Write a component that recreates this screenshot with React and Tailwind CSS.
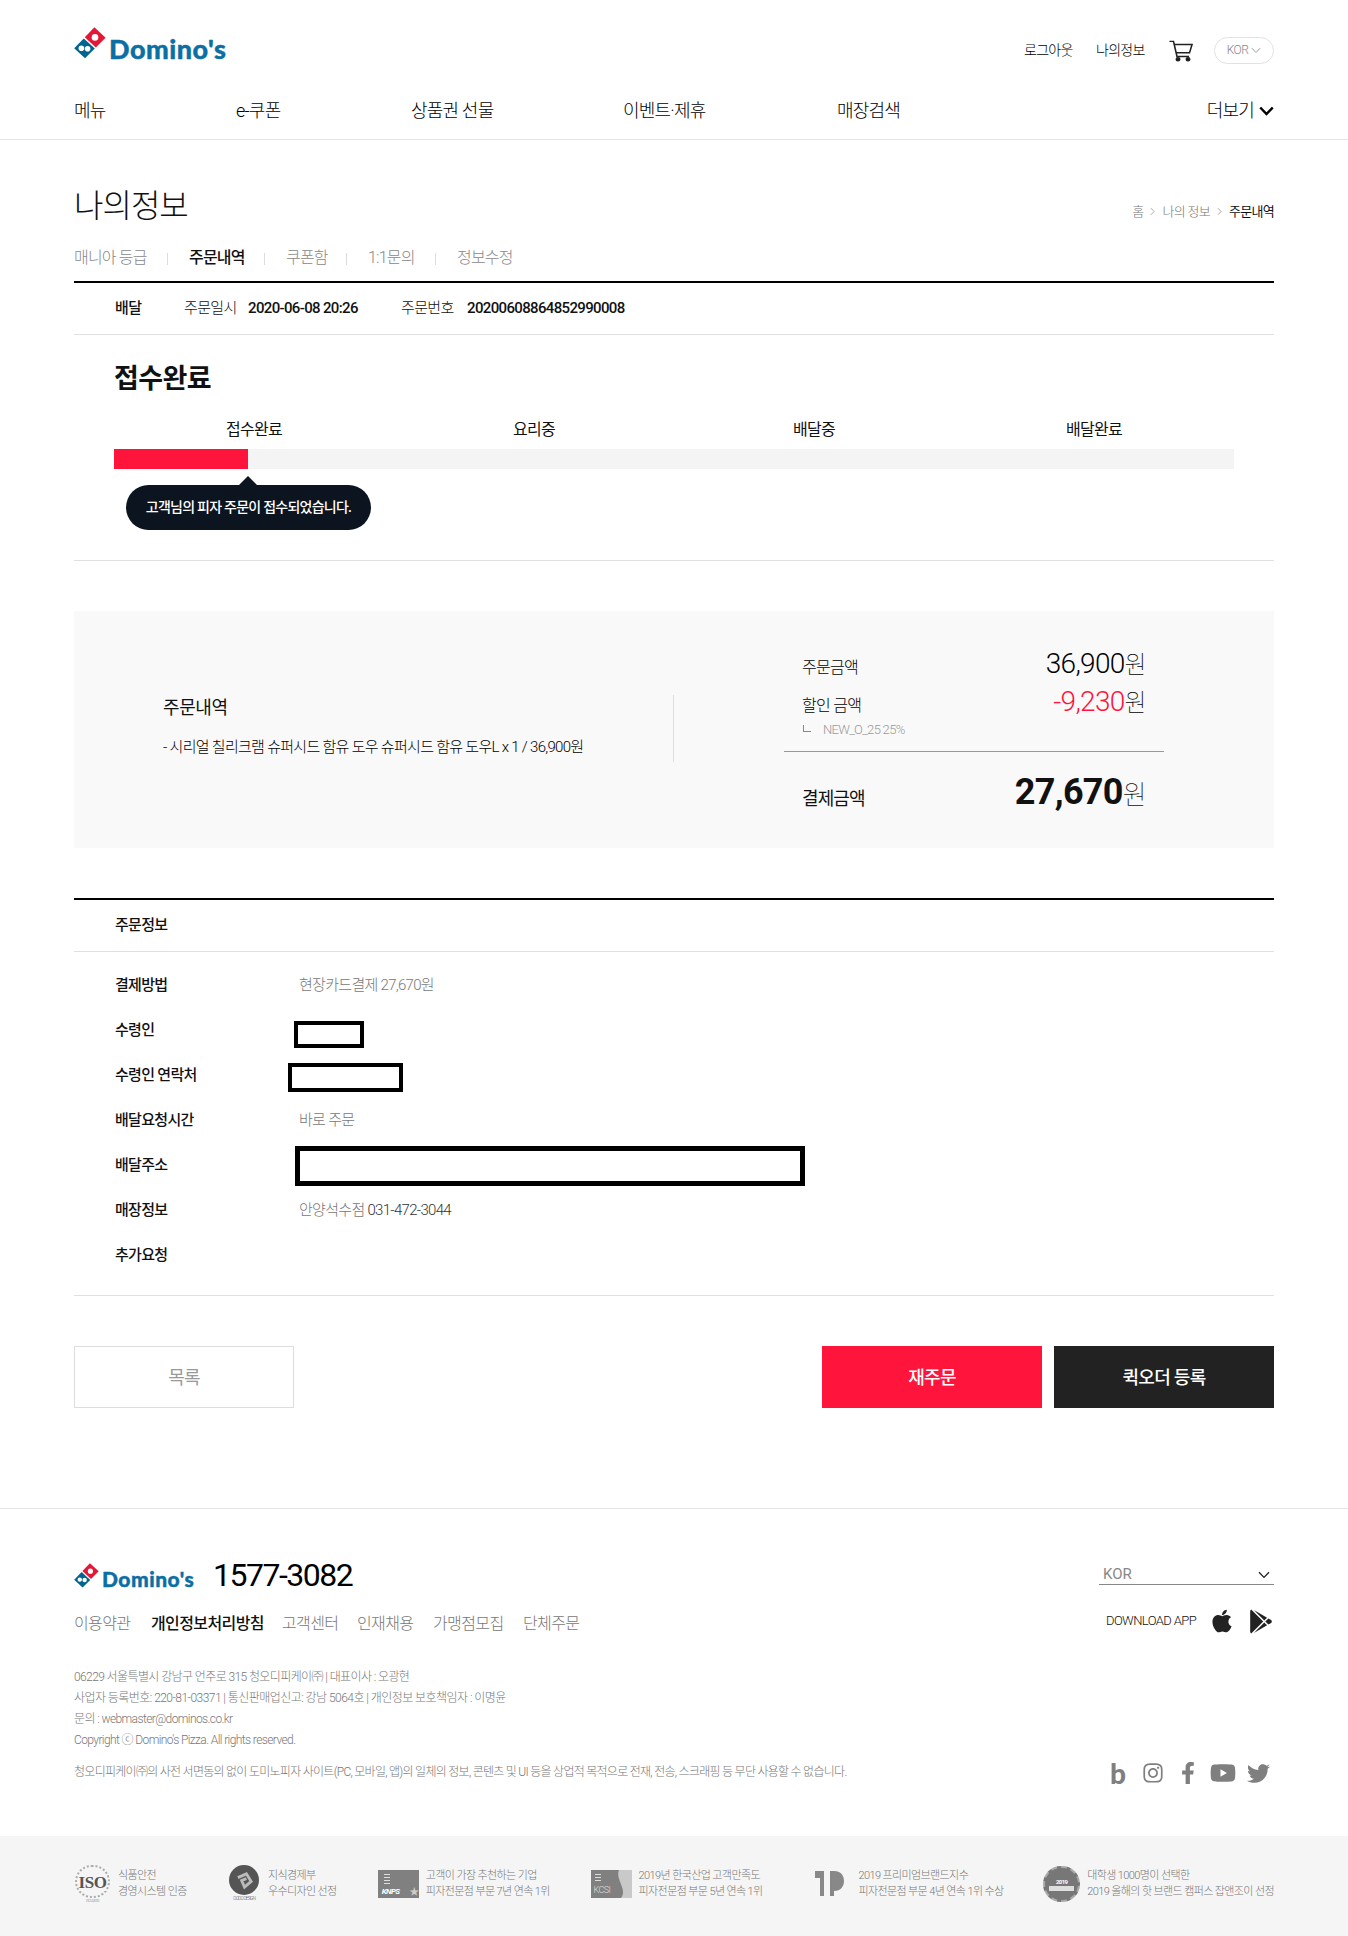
import React from "react";
import { FaApple, FaGooglePlay, FaInstagram, FaFacebookF, FaYoutube, FaTwitter } from "react-icons/fa";

const stack = "font-['Roboto','Noto_Sans_CJK_KR',sans-serif]";

const Logo = ({ small }) => (
  <div className={`flex items-end ${small ? "h-[30px] w-[122px] gap-[3px]" : "h-[32px] gap-[3px]"}`}>
    <svg viewBox="0 0 32 32" className={small ? "w-[25px] h-[25px] mb-[3px] shrink-0" : "w-[32px] h-[32px] shrink-0"}>
      <path d="M20.4 0.3 31.6 10.7 21.8 20.4 10.8 10.2Z" fill="#e31837" />
      <path d="M9.8 11.4 20.8 21.6 11 31.3 0.2 21.3Z" fill="#006491" />
      <circle cx="21" cy="10.4" r="3.3" fill="#fff" />
      <circle cx="7.4" cy="21.2" r="2.8" fill="#fff" />
      <circle cx="13.6" cy="21.8" r="2.8" fill="#fff" />
    </svg>
    <span className={`font-['Lato',sans-serif] font-black text-[#0b6fa4] leading-none whitespace-nowrap [-webkit-text-stroke:0.4px_#0b6fa4] ${small ? "text-[21px] tracking-[0.5px] mb-[2px]" : "text-[27px] tracking-[0.5px] -mb-[3px]"}`}>
      Domino's
    </span>
  </div>
);

const Cart = () => (
  <svg viewBox="0 0 24 24" preserveAspectRatio="none" className="w-[24px] h-[22px] mt-[2px]" fill="none" stroke="#222" strokeWidth="1.6">
    <path d="M0.5 1.5H4.5L8 18H20" />
    <path d="M5 5H23L20.5 14H7" />
    <circle cx="9" cy="21" r="1.7" fill="#222" />
    <circle cx="19" cy="21" r="1.7" fill="#222" />
  </svg>
);

const Chevron = ({ cls, width = 1.5 }) => (
  <svg viewBox="0 0 12 8" className={cls} fill="none" stroke="currentColor" strokeWidth={width}>
    <path d="M1 1.2 6 6.4 11 1.2" />
  </svg>
);

const Crumb = () => (
  <svg viewBox="0 0 6 10" className="w-[5px] h-[9px]" fill="none" stroke="#999" strokeWidth="1">
    <path d="M1 1 5 5 1 9" />
  </svg>
);

const tabs = [
  ["매니아 등급", "w-[115px]", false],
  ["주문내역", "w-[97px]", true],
  ["쿠폰함", "w-[82px]", false],
  ["1:1문의", "w-[89px]", false],
  ["정보수정", "", false],
];

const rows = [
  ["결제방법", "현장카드결제 27,670원"],
  ["수령인", ""],
  ["수령인 연락처", ""],
  ["배달요청시간", "바로 주문"],
  ["배달주소", ""],
  ["매장정보", "안양석수점 031-472-3044"],
  ["추가요청", ""],
];

const certs = [
  ["w-[154px]", "식품안전", "경영시스템 인증", "iso"],
  ["w-[150px]", "지식경제부", "우수디자인 선정", "dodo"],
  ["w-[213px]", "고객이 가장 추천하는 기업", "피자전문점 부문 7년 연속 1위", "knps"],
  ["w-[221px]", "2019년 한국산업 고객만족도", "피자전문점 부문 5년 연속 1위", "kcsi"],
  ["w-[232px]", "2019 프리미엄브랜드지수", "피자전문점 부문 4년 연속 1위 수상", "pb"],
  ["", "대학생 1000명이 선택한", "2019 올해의 핫 브랜드 캠퍼스 잡앤조이 선정", "camp"],
];

const CertIcon = ({ type }) => {
  if (type === "iso")
    return (
      <div className="relative w-[37px] h-[38px] flex items-center justify-center">
        <div className="absolute inset-x-[1px] top-0 bottom-[5px] rounded-full border-2 border-dotted border-[#aaa]" />
        <span className="relative font-['Liberation_Serif',serif] font-bold text-[17px] tracking-[-0.5px] text-[#555] bg-[#f5f5f5] leading-none mb-[4px]">ISO</span>
        <span className="absolute bottom-0 text-[4px] leading-[5px] text-[#888]">ISO 22000</span>
      </div>
    );
  if (type === "dodo")
    return (
      <div className="w-[33px] flex flex-col items-center">
        <div className="w-[30px] h-[30px] rounded-full bg-[#555] flex items-center justify-center">
          <svg viewBox="0 0 20 20" className="w-[19px] h-[19px]" fill="none" stroke="#bbb" strokeWidth="3">
            <path d="M3 7 12 3 17 11 10 17 7 10 12 8" />
          </svg>
        </div>
        <span className="text-[4.5px] leading-[8px] text-[#555] whitespace-nowrap">DODO DESIGN</span>
      </div>
    );
  if (type === "knps")
    return (
      <div className="relative w-[41px] h-[28px] bg-[#808080] overflow-hidden">
        <div className="absolute left-[6px] top-[4px] w-[6px] h-[11px] flex flex-col gap-[2px]">
          <div className="h-[1px] bg-[#ddd]" />
          <div className="h-[1px] bg-[#ddd]" />
          <div className="h-[1px] bg-[#ddd]" />
          <div className="h-[1px] bg-[#ddd]" />
        </div>
        <span className="absolute left-[4px] bottom-[2px] text-[8px] leading-none font-bold italic text-white">KNPS</span>
        <span className="absolute right-0 bottom-[1px] text-[10px] leading-none text-[#ccc]">★</span>
      </div>
    );
  if (type === "kcsi")
    return (
      <div className="relative w-[41px] h-[28px] bg-[#808080] overflow-hidden">
        <svg viewBox="0 0 41 28" className="absolute inset-0 w-full h-full">
          <path d="M28 0H41V28H30C37 20 24 9 28 0Z" fill="#c9c9c9" />
        </svg>
        <div className="absolute left-[4px] top-[4px] w-[6px] h-[8px] flex flex-col gap-[2px]">
          <div className="h-[1px] bg-[#ddd]" />
          <div className="h-[1px] bg-[#ddd]" />
          <div className="h-[1px] bg-[#ddd]" />
        </div>
        <span className="absolute left-[3px] bottom-[3px] text-[9px] leading-none text-[#ddd]">KCSI</span>
      </div>
    );
  if (type === "pb")
    return (
      <svg viewBox="0 0 40 36" className="w-[40px] h-[36px]">
        <path d="M4 5H13V30H9V12H4Z" fill="#888" />
        <path d="M19 5H23C31 5 33 11 33 15 33 20 30 25 23 25V30H19Z" fill="#888" />
      </svg>
    );
  return (
    <div className="w-[37px] h-[36px] rounded-full bg-[#777] border-[2px] border-dashed border-[#aaa] flex flex-col items-center justify-center">
      <span className="text-[6px] leading-[7px] font-bold text-white">2019</span>
      <div className="w-[25px] h-[5px] bg-[#ddd] mt-[1px]" />
    </div>
  );
};

export default function App() {
  return (
    <div className={`${stack} w-full bg-white text-[#111] min-h-[1936px]`}>
      <header className="h-[140px] border-b border-[#e5e5e5]">
        <div className="w-[1200px] mx-auto">
          <div className="flex justify-between pt-[27px] h-[97px]">
            <Logo />
            <div className="flex items-center h-[40px] pt-[6px] text-[14px] tracking-[-0.7px] font-light text-black">
              <span className="w-[72px]">로그아웃</span>
              <span className="w-[73px]">나의정보</span>
              <Cart />
              <div className="ml-[21px] w-[60px] h-[27px] rounded-full border border-[#e2e2e2] flex items-center justify-center gap-[3px] text-[12px] tracking-[-0.6px] text-[#888]">
                KOR <Chevron cls="w-[10px] h-[7px]" width={1} />
              </div>
            </div>
          </div>
          <nav className="flex items-center text-[18px] tracking-[-0.8px] font-light leading-[28px] text-black">
            <span className="w-[162px]">메뉴</span>
            <span className="w-[175px]">e-쿠폰</span>
            <span className="w-[212px]">상품권 선물</span>
            <span className="w-[214px]">이벤트·제휴</span>
            <span>매장검색</span>
            <span className="ml-auto flex items-center gap-[5px]">
              더보기 <Chevron cls="w-[15px] h-[10px]" width={2} />
            </span>
          </nav>
        </div>
      </header>

      <main className="w-[1200px] mx-auto">
        <div className="flex justify-between items-center pt-[43px] h-[88px]">
          <h1 className="text-[32px] font-light tracking-[-1px] leading-none">나의정보</h1>
          <div className="flex items-center gap-[7px] text-[13px] tracking-[-0.7px] font-light text-[#777] pt-[12px]">
            <span>홈</span>
            <Crumb />
            <span>나의 정보</span>
            <Crumb />
            <span className="text-[#111] font-normal">주문내역</span>
          </div>
        </div>

        <div className="flex items-center h-[53px] pt-[7px] text-[16px] tracking-[-0.8px] font-light text-[#888] leading-[20px]">
          {tabs.map(([t, w, on], i) => (
            <span key={t} className={`relative ${w} ${on ? "text-[#111] font-medium" : ""}`}>
              {t}
              {i < 4 && <i className="absolute right-[21px] top-[5px] w-[1px] h-[12px] bg-[#ddd]" />}
            </span>
          ))}
        </div>

        <div className="border-t-2 border-black h-[54px] border-b border-b-[#e0e0e0] flex items-center pl-[41px] text-[15px] tracking-[-0.65px]">
          <span className="w-[69px] font-medium">배달</span>
          <span className="w-[64px] font-light">주문일시</span>
          <span className="w-[153px] font-medium">2020-06-08 20:26</span>
          <span className="w-[66px] font-light">주문번호</span>
          <span className="font-medium">20200608864852990008</span>
        </div>

        <section className="h-[226px] border-b border-[#e0e0e0] pl-[40px] pr-[40px]">
          <h2 className="text-[27px] font-bold tracking-[-0.6px] leading-[34px] pt-[27px] h-[62px]">접수완료</h2>
          <div className="grid grid-cols-4 text-center text-[16px] tracking-[-0.7px] mt-[23px] leading-[20px]">
            <span>접수완료</span>
            <span>요리중</span>
            <span>배달중</span>
            <span>배달완료</span>
          </div>
          <div className="h-[20px] bg-[#f4f4f4] mt-[9px]">
            <div className="h-full w-[134px] bg-[#ff143c]" />
          </div>
          <div className="relative mt-[16px] ml-[12px] w-[245px] h-[45px] rounded-[23px] bg-[#0c1420] text-white flex items-center justify-center text-[14px] font-medium tracking-[-0.75px]">
            <i className="absolute left-[113px] -top-[9px] w-0 h-0 border-x-[9px] border-x-transparent border-b-[9px] border-b-[#0c1420]" />
            고객님의 피자 주문이 접수되었습니다.
          </div>
        </section>

        <section className="mt-[50px] h-[237px] bg-[#f9f9f9] flex">
          <div className="w-[600px] h-[67px] mt-[84px] pl-[89px] border-r border-[#dedede]">
            <div className="text-[18px] tracking-[-0.4px] leading-[24px] pt-[1px]">주문내역</div>
            <p className="mt-[17px] text-[15px] tracking-[-0.7px] font-light leading-[20px] text-black">
              - 시리얼 칠리크램 슈퍼시드 함유 도우 슈퍼시드 함유 도우L x 1 / 36,900원
            </p>
          </div>
          <div className="ml-[110px] w-[380px] pt-[35px]">
            <div className="px-[18px]">
              <div className="flex justify-between items-end h-[38px]">
                <span className="text-[16px] tracking-[-0.7px] font-light leading-[20px] mb-[6px] text-black">주문금액</span>
                <span className="text-[28px] font-light tracking-[-0.7px] leading-[38px] text-black">
                  36,900<span className="text-[24px] font-thin">원</span>
                </span>
              </div>
              <div className="flex justify-between items-end h-[38px]">
                <span className="text-[16px] tracking-[-0.7px] font-light leading-[20px] mb-[6px] text-black">할인 금액</span>
                <span className="text-[28px] font-light tracking-[-0.7px] leading-[38px] text-[#ff143c]">
                  -9,230<span className="text-[24px] font-thin text-black">원</span>
                </span>
              </div>
              <div className="flex items-center h-[24px] -mt-[4px] text-[13px] tracking-[-0.7px] font-light text-[#999]">
                <span className="w-[8px] h-[7px] border-l border-b border-[#888] mb-[4px] ml-[1px] mr-[12px]" />
                NEW_O_25 25%
              </div>
            </div>
            <div className="h-[1px] bg-[#999] mt-[9px]" />
            <div className="px-[18px] flex justify-between items-end h-[66px]">
              <span className="text-[18px] tracking-[-0.9px] leading-[22px] mb-[8px] font-normal">결제금액</span>
              <span className="text-[36px] font-bold tracking-[-0.7px] leading-[46px]">
                27,670<span className="text-[26px] font-thin">원</span>
              </span>
            </div>
          </div>
        </section>

        <section className="mt-[50px] border-t-2 border-black">
          <div className="h-[52px] border-b border-[#e0e0e0] flex items-center pl-[41px] text-[15px] tracking-[-0.7px] font-medium">주문정보</div>
          <div className="h-[344px] pt-[11px] border-b border-[#e0e0e0]">
            {rows.map(([k, v]) => (
              <div key={k} className="relative flex items-center h-[45px] pl-[41px] text-[15px] tracking-[-0.7px]">
                <span className="w-[184px] font-medium">{k}</span>
                <span className="font-light text-[#777]">
                  {v === "안양석수점 031-472-3044" ? (
                    <>
                      안양석수점 <span className="text-[#333]">031-472-3044</span>
                    </>
                  ) : (
                    v
                  )}
                </span>
                {k === "수령인" && <i className="absolute left-[220px] top-[13px] w-[70px] h-[27px] border-[4px] border-black" />}
                {k === "수령인 연락처" && <i className="absolute left-[214px] top-[10px] w-[115px] h-[29px] border-[4px] border-black" />}
                {k === "배달주소" && <i className="absolute left-[221px] top-[3px] w-[510px] h-[40px] border-[5px] border-black" />}
              </div>
            ))}
          </div>
        </section>

        <div className="flex mt-[50px] text-[18px] tracking-[-0.7px] font-medium">
          <button className="w-[220px] h-[62px] border border-[#ddd] text-[#999] font-normal">목록</button>
          <button className="ml-auto w-[220px] h-[62px] bg-[#ff143c] text-white">재주문</button>
          <button className="ml-[12px] w-[220px] h-[62px] bg-[#222] text-white">퀵오더 등록</button>
        </div>
      </main>

      <footer className="mt-[100px] border-t border-[#e5e5e5]">
        <div className="w-[1200px] mx-auto h-[327px] pt-[50px]">
          <div className="flex justify-between">
            <div>
              <div className="flex items-end h-[32px]">
                <Logo small />
                <span className="ml-[17px] text-[32px] font-normal tracking-[-1.5px] leading-[32px] text-black">1577-3082</span>
              </div>
              <div className="flex mt-[21px] text-[16px] tracking-[-0.6px] font-light text-[#777] leading-[24px]">
                <span className="w-[77px]">이용약관</span>
                <span className="w-[131px] text-[#111] font-medium">개인정보처리방침</span>
                <span className="w-[75px]">고객센터</span>
                <span className="w-[76px]">인재채용</span>
                <span className="w-[90px]">가맹점모집</span>
                <span>단체주문</span>
              </div>
            </div>
            <div className="w-[175px]">
              <div className="h-[20px] mt-[6px] border-b border-[#888] flex items-center justify-between pl-[4px] pr-[4px] text-[15px] text-[#888]">
                KOR <Chevron cls="w-[12px] h-[8px] text-[#222]" width={1.3} />
              </div>
              <div className="flex items-center mt-[23px] pl-[7px] text-[13px] tracking-[-0.6px] text-[#111] font-light">
                <span className="w-[103px] whitespace-nowrap">DOWNLOAD APP</span>
                <FaApple className="w-[26px] h-[26px] text-[#222]" />
                <FaGooglePlay className="ml-[14px] w-[24px] h-[25px] text-[#222]" />
              </div>
            </div>
          </div>

          <div className="flex justify-between mt-[31px]">
            <div className="text-[12px] tracking-[-0.6px] font-light text-[#777] leading-[21px]">
              <p>06229 서울특별시 강남구 언주로 315 청오디피케이㈜ | 대표이사 : 오광현</p>
              <p className="tracking-[-0.55px]">사업자 등록번호: 220-81-03371 | 통신판매업신고: 강남 5064호 | 개인정보 보호책임자 : 이명윤</p>
              <p>문의 : webmaster@dominos.co.kr</p>
              <p>Copyright ⓒ Domino's Pizza. All rights reserved.</p>
              <p className="mt-[11px] tracking-[-0.72px]">청오디피케이㈜의 사전 서면동의 없이 도미노피자 사이트(PC, 모바일, 앱)의 일체의 정보, 콘텐츠 및 UI 등을 상업적 목적으로 전재, 전송, 스크래핑 등 무단 사용할 수 없습니다.</p>
            </div>
            <div className="flex items-center self-end text-[#7f7f7f] h-[24px] mb-[-2px] mr-[4px]">
              <span className="font-['Lato',sans-serif] font-black text-[28px] leading-none w-[32px]">b</span>
              <FaInstagram className="w-[22px] h-[22px]" />
              <FaFacebookF className="ml-[17px] w-[14px] h-[22px]" />
              <FaYoutube className="ml-[15px] w-[26px] h-[24px]" />
              <FaTwitter className="ml-[11px] w-[23px] h-[23px]" />
            </div>
          </div>
        </div>
        <div className="h-[100px] bg-[#f5f5f5]">
          <div className="w-[1200px] mx-auto flex items-center h-full text-[11px] tracking-[-0.6px] font-light text-[#777] leading-[16px] pb-[4px]">
            {certs.map(([w, a, b, type]) => (
              <div key={type} className={`flex items-center gap-[7px] ${w}`}>
                <CertIcon type={type} />
                <div className="whitespace-nowrap">
                  <p>{a}</p>
                  <p>{b}</p>
                </div>
              </div>
            ))}
          </div>
        </div>
      </footer>
    </div>
  );
}
